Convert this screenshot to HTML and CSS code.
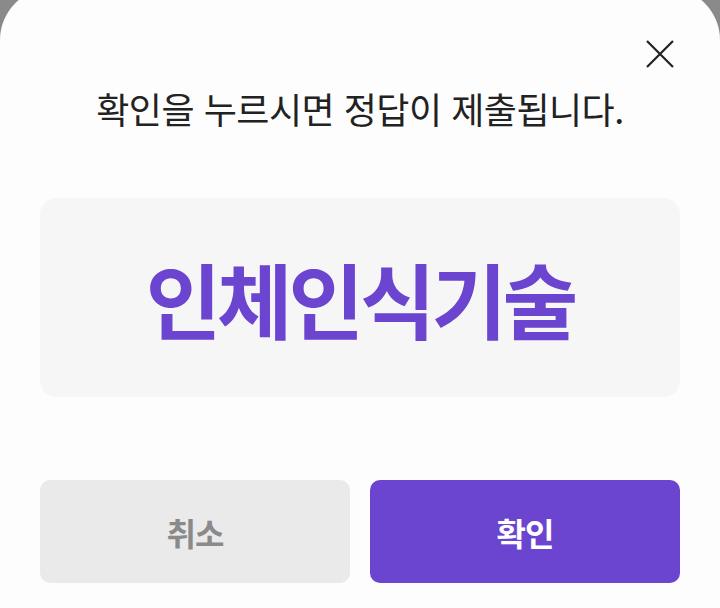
FILE: index.html
```html
<!DOCTYPE html>
<html lang="ko">
<head>
    <meta charset="UTF-8">
    <meta name="viewport" content="width=device-width, initial-scale=1.0">
    <title>정답 제출 확인</title>
    <link rel="stylesheet" href="styles.css">
</head>
<body>
    <div class="sheet">
        <div class="sheet-top">
            <button class="close-btn" type="button" aria-label="닫기">
                <svg width="28" height="28" viewBox="0 0 28 28">
                    <path d="M1 1L27 27M27 1L1 27" stroke="#222" stroke-width="2.2" fill="none"/>
                </svg>
            </button>
        </div>

        <p class="notice">확인을 누르시면 정답이 제출됩니다.</p>

        <!-- 제출할 정답 -->
        <div class="answer-box">
            <span class="answer">인체인식기술</span>
        </div>

        <div class="actions">
            <button class="btn btn-cancel" type="button">취소</button>
            <button class="btn btn-confirm" type="button">확인</button>
        </div>
    </div>
</body>
</html>
```

FILE: styles.css
```css
html, body {
    margin: 0;
    height: 100%;
    overflow: hidden;
}
body {
    background-color: #8a8a8a;
    font-family: "Noto Sans CJK KR", "Noto Sans", sans-serif;
}
.sheet {
    margin-top: -12px;
    height: calc(100% + 12px);
    background-color: #fdfdfd;
    border-radius: 52px 52px 0 0;
    padding: 46px 40px 0;
    box-sizing: border-box;
}
.sheet-top {
    display: flex;
    justify-content: flex-end;
}
.close-btn {
    width: 40px;
    height: 40px;
    padding: 0;
    border: none;
    background: none;
    display: flex;
    align-items: center;
    justify-content: center;
    cursor: pointer;
}
.notice {
    margin: 10px 0 0;
    text-align: center;
    font-size: 36px;
    line-height: 48px;
    color: #222;
    letter-spacing: -0.5px;
}
.answer-box {
    margin-top: 66px;
    height: 199px;
    background-color: #f6f6f6;
    border-radius: 16px;
    display: flex;
    align-items: center;
    justify-content: center;
}
.answer {
    font-size: 82px;
    font-weight: bold;
    color: #6b45d0;
    letter-spacing: -4px;
}
.actions {
    margin-top: 83px;
    display: flex;
    gap: 20px;
}
.btn {
    flex: 1;
    height: 103px;
    border: none;
    border-radius: 10px;
    font-family: inherit;
    font-size: 32px;
    font-weight: bold;
    letter-spacing: -1px;
    cursor: pointer;
}
.btn-cancel {
    background-color: #eaeaea;
    color: #8a8a8a;
}
.btn-confirm {
    background-color: #6b45d0;
    color: #fff;
}
```
